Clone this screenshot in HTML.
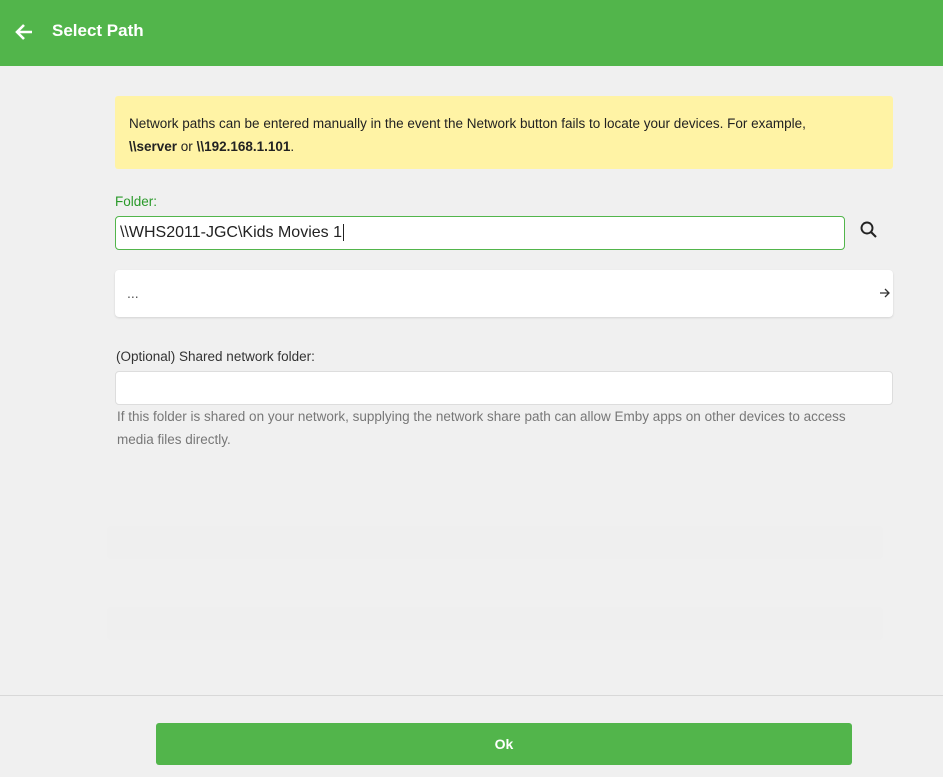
<!DOCTYPE html>
<html><head><style>
body{margin:0;width:943px;height:777px;background:#f0f0f0;font-family:"Liberation Sans",sans-serif;position:relative;overflow:hidden}
.hdr{position:absolute;left:0;top:0;width:943px;height:66px;background:#52b54b}
.hdr .t{position:absolute;left:52px;top:21px;color:#fff;font-weight:bold;font-size:17px}
.note{position:absolute;left:115px;top:96px;width:778px;height:73px;background:#fff3a5;border-radius:3px;box-sizing:border-box;padding:16px 14px;font-size:13.5px;line-height:23px;color:#222}
.lbl{position:absolute;font-size:13.5px}
.inp{position:absolute;background:#fff;box-sizing:border-box;border-radius:4px}
.help{position:absolute;left:117px;top:405px;width:778px;font-size:13.5px;line-height:23px;color:#777}
.foot{position:absolute;left:0;top:695px;width:943px;border-top:1px solid #d8d8d8}
.ok{position:absolute;left:156px;top:723px;width:696px;height:42px;background:#52b54b;border-radius:3px;color:#fff;font-weight:bold;font-size:14px;text-align:center;line-height:42px}
.ghost{position:absolute;left:107px;width:776px;height:33px;background:#efefef;border-radius:4px}
</style></head><body>
<div class="hdr">
<svg style="position:absolute;left:14px;top:22px" width="20" height="20" viewBox="0 0 20 20"><path d="M18 10H3M10 3L3 10l7 7" stroke="#fff" stroke-width="2.6" fill="none"/></svg>
<div class="t">Select Path</div></div>
<div class="note">Network paths can be entered manually in the event the Network button fails to locate your devices. For example,<br><b>\\server</b> or <b>\\192.168.1.101</b>.</div>
<div class="lbl" style="left:115px;top:194px;color:#2a9a2a">Folder:</div>
<div class="inp" style="left:115px;top:216px;width:730px;height:34px;border:1px solid #52b54b;font-size:16px;line-height:32px;padding-left:4px;color:#222">\\WHS2011-JGC\Kids Movies 1<span style="border-left:1px solid #222;margin-left:1px"></span></div>
<svg style="position:absolute;left:859px;top:220px" width="20" height="20" viewBox="0 0 20 20"><circle cx="8" cy="8" r="5.5" stroke="#222" stroke-width="1.9" fill="none"/><path d="M12 12l5 5" stroke="#222" stroke-width="2.1"/></svg>
<div class="inp" style="left:115px;top:270px;width:778px;height:47px;box-shadow:0 1px 2px rgba(0,0,0,.12);font-size:14px;line-height:47px;padding-left:12px;color:#555">...</div>
<svg style="position:absolute;left:879px;top:287px" width="12" height="12" viewBox="0 0 12 12"><path d="M1 6h9M6 2l4 4-4 4" stroke="#333" stroke-width="1.3" fill="none"/></svg>
<div class="lbl" style="left:116px;top:349px;color:#333">(Optional) Shared network folder:</div>
<div class="inp" style="left:115px;top:371px;width:778px;height:34px;border:1px solid #ddd"></div>
<div class="help">If this folder is shared on your network, supplying the network share path can allow Emby apps on other devices to access<br>media files directly.</div>
<div class="ghost" style="top:526px"></div>
<div class="ghost" style="top:607px"></div>
<div class="foot"></div>
<div class="ok">Ok</div>
</body></html>
